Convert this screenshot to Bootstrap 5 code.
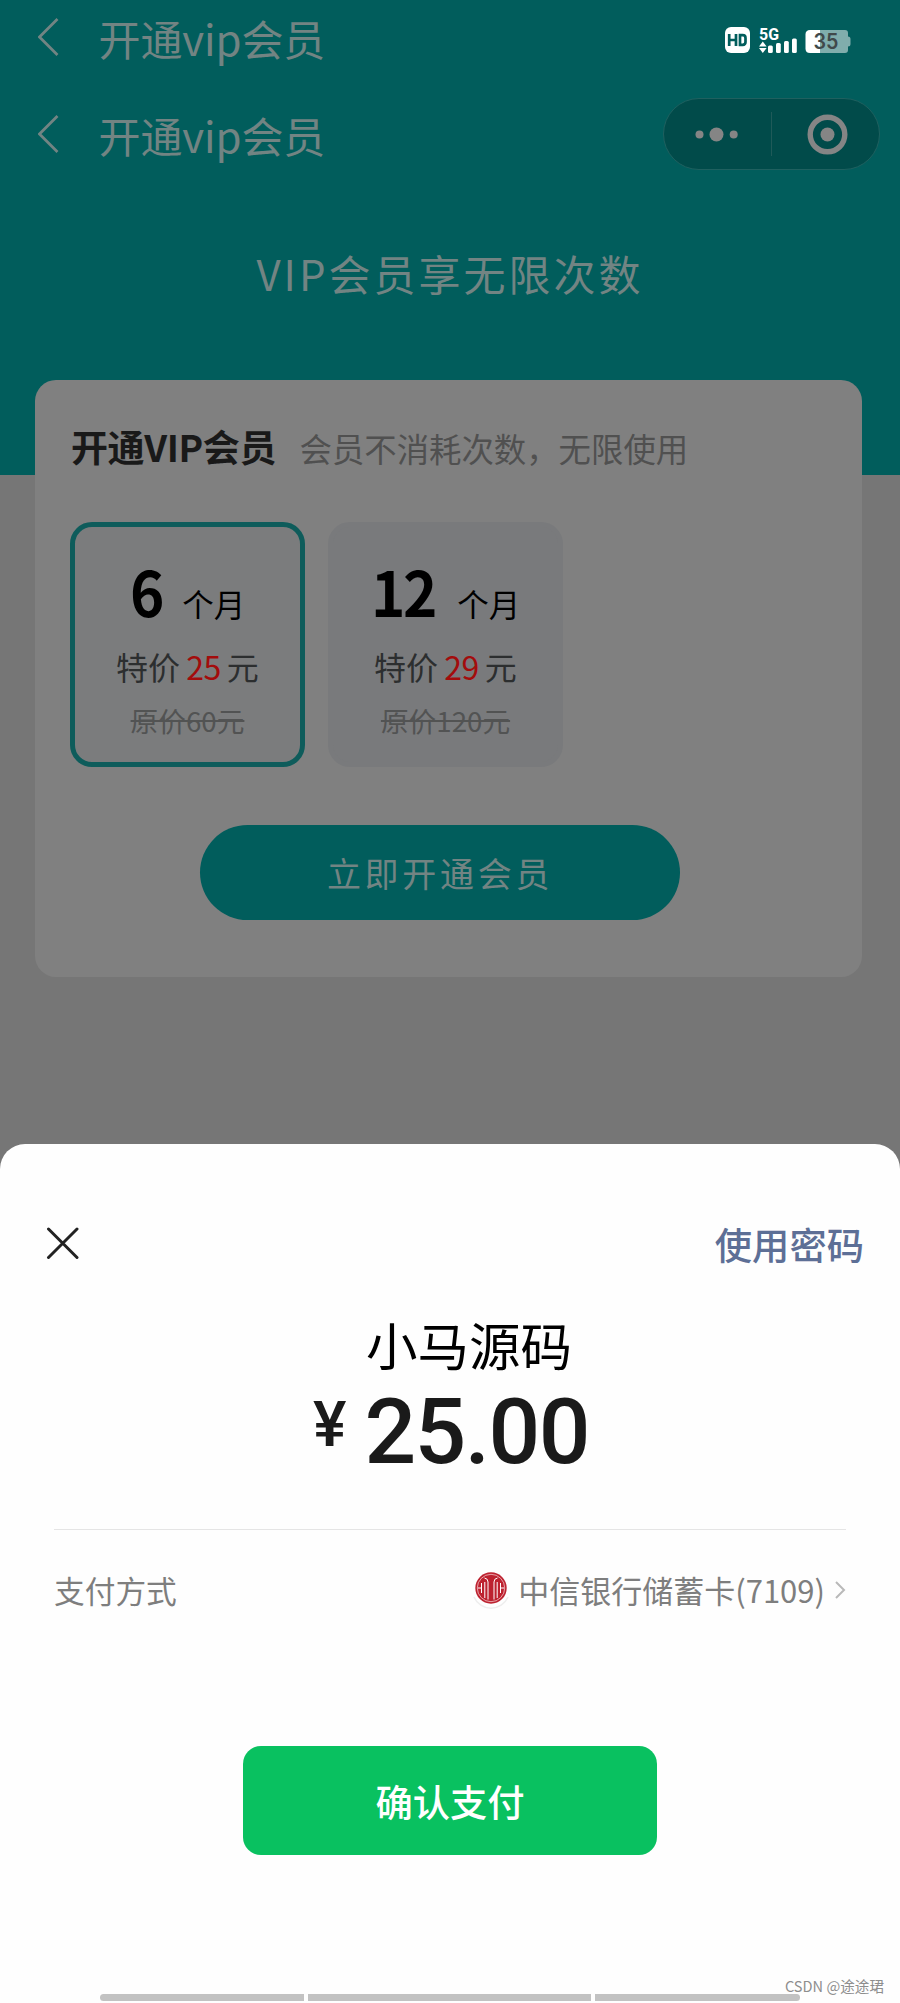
<!DOCTYPE html>
<html lang="zh-CN">
<head>
<meta charset="utf-8">
<meta name="viewport" content="width=device-width, initial-scale=1">
<title>开通vip会员</title>
<link href="https://cdn.jsdelivr.net/npm/bootstrap@5.3.0/dist/css/bootstrap.min.css" rel="stylesheet">
<style>
  body { font-family: "Noto Sans CJK SC", sans-serif; background: #767676; width: 900px; height: 2003px; overflow: hidden; line-height: 1; }
  .hero { height: 475px; background: #015d5c; color: #728483; }
  .bar-row { height: 73px; padding-left: 38px; }
  .bar-title { font-size: 42px; line-height: 73px; margin-left: 38.500px; letter-spacing: -.1px; padding-top: 1px; margin-bottom: -1px; }
  .status-icons { margin-right: 49px; margin-top: 7px; }
  .capsule { width: 217px; height: 72px; margin-right: 20px; background: #014b4a; border: 1px solid #1f605f; }
  .slogan { margin-top: 73px; font-size: 42px; line-height: 60px; letter-spacing: 3px; }
  .vip-card { width: 827px; height: 597px; margin: -95px 0 0 35px; padding: 35px 35px 0; background: #808080; border-radius: 21px; }
  .vip-title { font-size: 37px; line-height: 60px; color: #191919; letter-spacing: -.4px; width: 228px; padding-left: 1px; }
  .vip-note { font-size: 32.4px; line-height: 62px; color: #505050; padding: 2px 0 0 1.500px; margin-bottom: -2px; }
  .plans { margin-top: 45px; gap: 23px; }
  .plan { width: 235px; height: 245px; border-radius: 22px; background: #797a7c; border: 5px solid #797a7c; padding-top: 20px; }
  .plan.chosen { background: #7b7c7d; border-color: #0e5c5b; }
  .term { height: 94px; line-height: 86px; color: #000; font-size: 31.500px; }
  .term b { display: inline-block; font-size: 62px; letter-spacing: -2.500px; margin-right: 18.500px; transform: scaleX(.94); transform-origin: left; }
  .deal { height: 50px; line-height: 50px; font-size: 32px; color: #2c2e2f; }
  .deal span { color: #a30c0c; margin: 0 6px; letter-spacing: -.4px; }
  .was { height: 50px; line-height: 50px; margin-top: 4px; font-size: 27.7px; color: #525353; text-decoration: line-through; text-decoration-thickness: 2px; }
  .open-btn { width: 480px; height: 95px; margin: 58px 0 0 130px; background: #015d5c; color: #728483; font-size: 34px; line-height: 95px; letter-spacing: 3.7px; }
  .sheet { height: 859px; margin-top: 167px; padding-top: 74px; background: #fefefe; border-radius: 25px 25px 0 0; }
  .sheet-top { height: 50px; padding: 0 36px 0 46px; }
  .use-pwd { font-size: 37.3px; font-weight: 500; line-height: 50px; color: #5d6f96; margin-top: 2px; }
  .payee { font-size: 51.500px; line-height: 70px; margin-top: 41px; padding-left: 38px; color: #000; }
  .amount { font-family: Roboto, sans-serif; font-weight: 500; color: #1a1a1a; height: 90px; margin-top: 8px; padding-left: 2px; font-size: 91px; line-height: 90px; }
  .amount small { font-size: 63px; line-height: 75px; margin-right: 18px; }
  .amount span { letter-spacing: -1.500px; }
  .method { margin: 52px 54px 0; border-top: 1px solid #e5e5e5; padding-top: 35px; font-size: 30.7px; line-height: 50px; color: #7e7e7e; }
  .bank-name { font-size: 31px; margin-left: 6px; }
  .pay-btn { width: 414px; height: 109px; margin: 131px auto 0; border-radius: 18px; background: #09c160; color: #fff; font-size: 37.3px; font-weight: 500; line-height: 111px; }
  .foot { margin-top: 118px; height: 30px; }
  .nav-bars { gap: 4px; left: 100px; bottom: 2px; width: 700px; height: 7px; }
  .nav-bars i { background: #c2c2c2; height: 7px; }
  .nav-left { width: 204px; }
  .nav-mid { width: 283px; }
  .credit { font-size: 14.6px; line-height: 24px; color: #8e8e8e; right: 16px; top: 1px; }
</style>
</head>
<body>
<header class="hero">
  <div class="bar-row d-flex align-items-center">
    <svg width="22" height="40" viewBox="0 0 22 40" fill="none" stroke="#728483" stroke-width="2.800"><path d="M19.500 2 1.500 20l18 18"/></svg>
    <span class="bar-title">开通vip会员</span>
    <svg class="status-icons ms-auto" width="126" height="30" viewBox="0 0 126 30">
      <rect x="0" y="2" width="25" height="26" rx="6" fill="#fff"/>
      <path d="M4.200 9v12M11 9v12M4.200 15H11M15 10.200h2.700q2.800 0 2.800 2.800v4q0 2.800-2.800 2.800H15z" fill="none" stroke="#015d5c" stroke-width="2.700"/>
      <text x="34" y="15" font-family="Roboto, sans-serif" font-size="16.500" font-weight="700" fill="#fff" textLength="20" lengthAdjust="spacingAndGlyphs">5G</text>
      <path d="M34 21.500l3.800-5 3.800 5zM34 23l3.800 5 3.800-5z" fill="#fff"/>
      <g fill="#fff"><rect x="43" y="20.500" width="4.800" height="7.500" rx="1.500"/><rect x="51" y="18" width="4.800" height="10" rx="1.500"/><rect x="59" y="16" width="4.800" height="12" rx="1.500"/><rect x="67" y="13.500" width="4.800" height="14.500" rx="1.500"/></g>
      <path d="M86 5h34q3 0 3 3v3.500q2.500 0 2.500 2.500v5q0 2.500-2.500 2.500V25q0 3-3 3H86z" fill="#80adac"/>
      <path d="M95 5H85q-4.500 0-4.500 4.500v14Q80.500 28 85 28h10z" fill="#fff"/>
      <text x="88.500" y="24" font-family="Inter, sans-serif" font-size="21" font-weight="600" fill="#40494a" textLength="25" lengthAdjust="spacingAndGlyphs">35</text>
    </svg>
  </div>
  <div class="bar-row d-flex align-items-center mt-4">
    <svg width="22" height="40" viewBox="0 0 22 40" fill="none" stroke="#728483" stroke-width="2.800"><path d="M19.500 2 1.500 20l18 18"/></svg>
    <span class="bar-title">开通vip会员</span>
    <div class="capsule ms-auto rounded-pill">
      <svg class="d-block" width="215" height="70" viewBox="0 0 215 70" fill="#858585">
        <circle cx="35.500" cy="35.500" r="4"/><circle cx="52.500" cy="35.500" r="7"/><circle cx="69.700" cy="35.500" r="4"/>
        <path d="M107.500 13v44" stroke="#1f5a59"/>
        <circle cx="163.500" cy="35.500" r="17.300" fill="none" stroke="#858585" stroke-width="5.400"/><circle cx="163.500" cy="35.500" r="7"/>
      </svg>
    </div>
  </div>
  <div class="slogan text-center">VIP会员享无限次数</div>
</header>

<main class="vip-card">
  <div class="d-flex align-items-center">
    <div class="vip-title fw-bold text-nowrap">开通VIP会员</div>
    <div class="vip-note text-nowrap">会员不消耗次数，无限使用</div>
  </div>
  <div class="plans d-flex text-center">
    <div class="plan chosen">
      <div class="term"><b>6</b>个月</div>
      <div class="deal">特价<span>25</span>元</div>
      <div class="was">原价60元</div>
    </div>
    <div class="plan">
      <div class="term"><b>12</b>个月</div>
      <div class="deal">特价<span>29</span>元</div>
      <div class="was">原价120元</div>
    </div>
  </div>
  <button class="open-btn btn rounded-pill p-0 border-0 d-block">立即开通会员</button>
</main>

<section class="sheet overflow-hidden">
  <div class="sheet-top d-flex justify-content-between align-items-center">
    <svg width="33" height="33" viewBox="0 0 33 33" stroke="#222" stroke-width="3" stroke-linecap="round"><path d="M2.500 2l28.500 28.500M31 2l-28.500 28.500"/></svg>
    <span class="use-pwd">使用密码</span>
  </div>
  <div class="payee text-center">小马源码</div>
  <div class="amount d-flex justify-content-center align-items-start"><small>¥</small><span>25.00</span></div>
  <div class="method d-flex align-items-center">
    <span>支付方式</span>
    <svg class="ms-auto" width="42" height="42" viewBox="0 0 42 42">
      <path d="M4 28a18.500 18.500 0 0 0 34 0" fill="none" stroke="#eee" stroke-width="1.500"/>
      <circle cx="21" cy="19" r="15.700" fill="#bd2230"/>
      <circle cx="21" cy="19" r="13.700" fill="none" stroke="#f3c4c8" stroke-width=".8"/>
      <path d="M14.500 9q3.500.5 3.500 4V30.500M27.500 9q-3.500.5-3.500 4V30.500M14.800 13v16M27.200 13v16M11.500 14v10M8 19h3.500M30.500 14v10M34 19h-3" fill="none" stroke="#fff" stroke-width="1"/>
    </svg>
    <span class="bank-name">中信银行储蓄卡(7109)</span>
    <svg class="ms-2" width="13" height="20" viewBox="0 0 13 20" fill="none" stroke="#b9b9b9" stroke-width="2"><path d="M3 2l8 8-8 8"/></svg>
  </div>
  <button class="pay-btn btn p-0 border-0 d-block">确认支付</button>
  <footer class="foot position-relative">
    <div class="nav-bars d-flex position-absolute">
      <i class="nav-left rounded-start-pill"></i><i class="nav-mid"></i><i class="rounded-end-pill flex-fill"></i>
    </div>
    <span class="credit position-absolute">CSDN @途途珺</span>
  </footer>
</section>
<script src="https://cdn.jsdelivr.net/npm/bootstrap@5.3.0/dist/js/bootstrap.bundle.min.js"></script>
</body>
</html>
